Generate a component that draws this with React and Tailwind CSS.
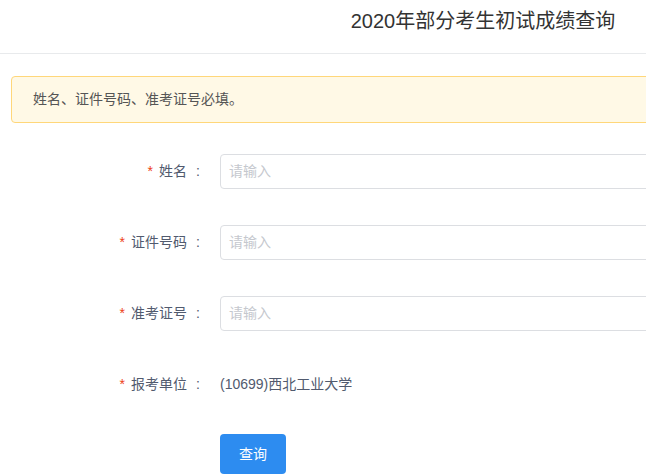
import React from "react";

const font = { fontFamily: '"Liberation Sans", "Noto Sans CJK SC", sans-serif' };

function Label({ children }) {
  return (
    <div className="w-[208px] shrink-0 flex items-center justify-end pr-[3px] text-[14px] text-[#515a6e]">
      <span className="text-[#ed4014] mr-[6px] text-[14px]">*</span>
      <span>{children}</span>
      <span className="w-[14px] ml-[4px] text-center">:</span>
    </div>
  );
}

function InputRow({ label }) {
  return (
    <div className="flex items-center h-[35px]">
      <Label>{label}</Label>
      <div className="ml-[12px] flex-1 h-[35px] border border-[#dcdee2] rounded-[4px] flex items-center pl-[8px] text-[14px] text-[#c5c8ce]">
        请输入
      </div>
    </div>
  );
}

export default function App() {
  return (
    <div className="w-[646px] h-[476px] overflow-hidden bg-white" style={font}>
      <div className="w-[966px]">
        <div className="h-[54px] border-b border-[#e8eaec] flex justify-center pt-[8px]">
          <div className="text-[20px] leading-[26px] text-[#333]">2020年部分考生初试成绩查询</div>
        </div>
        <div className="ml-[11px] mr-[11px] mt-[22px] h-[47px] border border-[#ffd77a] bg-[#fff9e6] rounded-[4px] flex items-center pl-[21px] text-[14px] text-[#555]">
          姓名、证件号码、准考证号必填。
        </div>
        <div className="mt-[31px] flex flex-col gap-[36px]">
          <InputRow label="姓名" />
          <InputRow label="证件号码" />
          <InputRow label="准考证号" />
          <div className="flex items-center h-[35px]">
            <Label>报考单位</Label>
            <div className="ml-[12px] text-[14px] text-[#515a6e]">(10699)西北工业大学</div>
          </div>
        </div>
        <div className="mt-[32px] pl-[220px]">
          <button className="w-[66px] h-[40px] rounded-[4px] bg-[#2d8cf0] text-white text-[14px]">查询</button>
        </div>
      </div>
    </div>
  );
}
